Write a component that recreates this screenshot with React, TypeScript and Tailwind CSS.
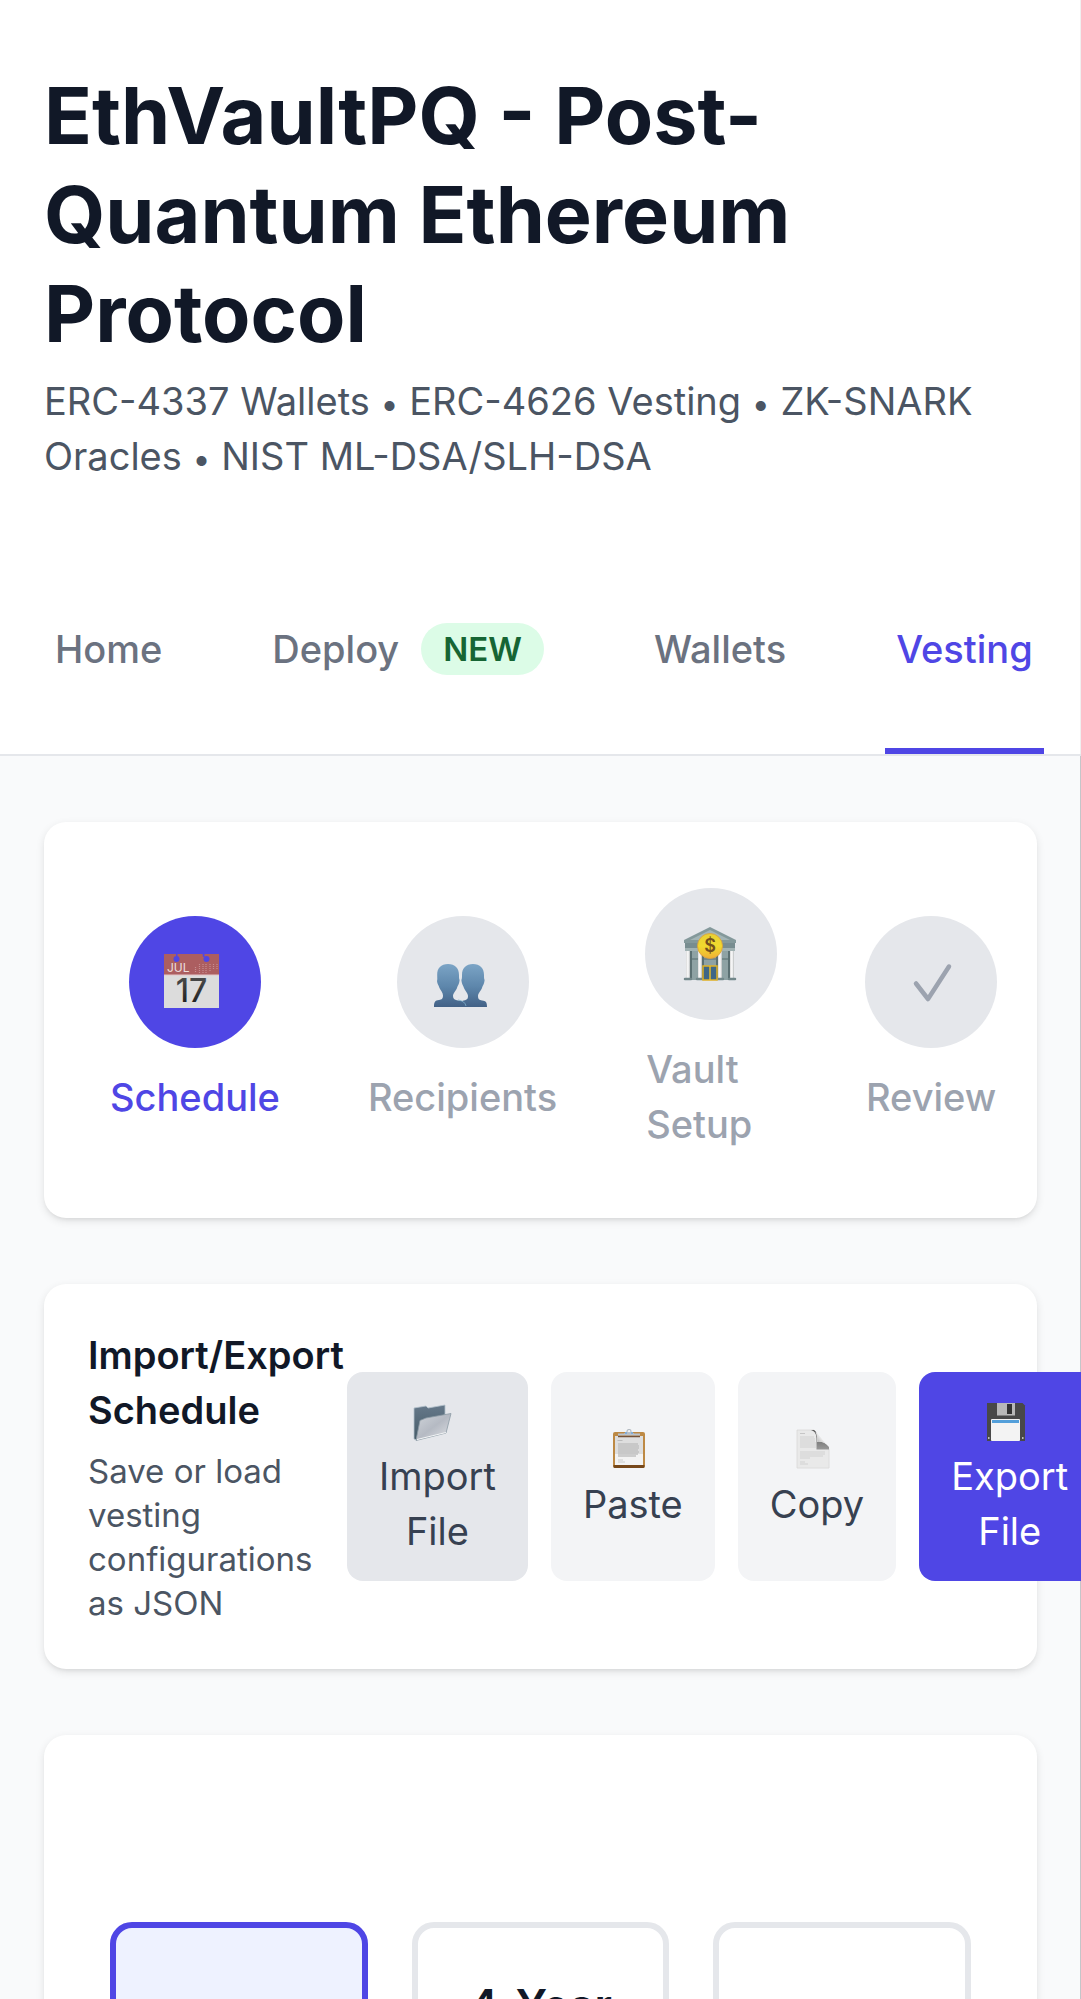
import type { ReactNode } from 'react';

function CalendarIcon() {
  return (
    <svg width="66" height="66" viewBox="0 0 66 66" aria-hidden="true">
      <defs>
        <linearGradient id="digit" x1="0" y1="0" x2="0" y2="1">
          <stop offset="0" stopColor="#555" />
          <stop offset="1" stopColor="#161616" />
        </linearGradient>
      </defs>
      <rect x="2" y="5" width="55" height="54" fill="#dcdcdc" />
      <rect x="2" y="5" width="55" height="21" fill="#ac5e60" />
      <path d="M2 26h55" stroke="#e4c6c8" strokeWidth="1" />
      <g fill="#4f46e5">
        <circle cx="14.500" cy="10" r="3" />
        <circle cx="44.500" cy="10" r="3" />
        <rect x="14" y="4" width="1.500" height="6" />
        <path d="M40.500 5h2v3h-1.500z" />
      </g>
      <text x="5" y="23" fontSize="12" fill="#eddede" fontFamily="Inter, sans-serif">JUL</text>
      <g stroke="#c68e90" strokeWidth="1.200" strokeDasharray="1 1">
        <path d="M33.500 18v6M37.500 15v9M41 15v9M44 15v9M48 15v7M51.500 15v6M55 15v5" />
      </g>
      <text x="29.500" y="53" textAnchor="middle" fontSize="32" fontWeight="500" fill="url(#digit)" fontFamily="Inter, sans-serif">17</text>
    </svg>
  );
}

function PeopleIcon() {
  return (
    <svg width="66" height="66" viewBox="0 0 66 66" aria-hidden="true">
      <defs>
        <linearGradient id="bust" x1="0" y1="13" x2="0" y2="58" gradientUnits="userSpaceOnUse">
          <stop offset="0" stopColor="#7ea7c8" />
          <stop offset=".55" stopColor="#5d86ab" />
          <stop offset="1" stopColor="#426186" />
        </linearGradient>
      </defs>
      <path fill="url(#bust)" d="M43 15c7 0 11 4 11 11 0 2 0 4 .6 5-.3 4-1.600 5-2.600 8-1 3-4 5-4 8 0 3 1 4 4 4.500 4 .5 5 1.500 5 6.500H24c0-4 5-5.500 8-6 5-1 6-2 6-5 0-3-3-5-4-8-1-3-2.300-4-2.600-8 .6-1 .6-3 .6-5 0-7 4-11 11-11z" />
      <path fill="url(#bust)" d="M18 15c7 0 11 4 11 11 0 2 0 4 .6 5-.3 4-1.600 5-2.600 8-1 3-4 5-4 8 0 3 2 4 5 4.500 5 .5 8 1.500 8 6.500H4c0-5 1-6.500 5-7 3-.5 4-1.500 4-4.500 0-3-2.500-5-3.500-7.500-1-3-2.200-4-2.500-7 .5-1 .2-4 .2-6C7 19 11 15 18 15z" />
      <path d="M28 51q7 1 8 6" fill="none" stroke="#7fb3cd" strokeWidth=".8" />
    </svg>
  );
}

function BankIcon() {
  return (
    <svg width="66" height="66" viewBox="0 0 66 66" aria-hidden="true">
      <defs>
        <linearGradient id="coin" x1="0" y1="0" x2="0" y2="1">
          <stop offset="0" stopColor="#e8cf34" />
          <stop offset=".5" stopColor="#f0da2e" />
          <stop offset="1" stopColor="#efb034" />
        </linearGradient>
        <linearGradient id="column" x1="0" y1="0" x2="1" y2="0">
          <stop offset="0" stopColor="#d8d8d8" />
          <stop offset=".5" stopColor="#fff" />
          <stop offset="1" stopColor="#b9bcbd" />
        </linearGradient>
      </defs>
      <path d="M6 19 32 6l26 13v3H6z" fill="#84999b" />
      <path d="M12 19 32 9l20 10z" fill="#a3b5b6" />
      <path d="M7 22h50v6H7z" fill="#788d90" />
      <path d="M7 27h50v3H7z" fill="#a1b2b3" />
      <path d="M8 30h48v29H8z" fill="#8ea2a4" />
      <path d="M8 38h48" stroke="#697f82" strokeWidth="1.500" />
      <path d="M13 30v27M25 30v27M39 30v27M51 30v27" stroke="#5b7073" strokeWidth="2" />
      <g fill="url(#column)">
        <rect x="8" y="30" width="4" height="27" />
        <rect x="20" y="30" width="4" height="27" />
        <rect x="40" y="30" width="4" height="27" />
        <rect x="52" y="30" width="4" height="27" />
      </g>
      <path d="M7 58h6M19 58h6M39 58h6M51 58h6" stroke="#72878a" strokeWidth="2.500" strokeLinecap="round" />
      <rect x="25" y="45" width="14" height="14" fill="#3f6786" stroke="#dfb126" strokeWidth="1.500" />
      <path d="M32 45v14" stroke="#e7bd2d" strokeWidth="1.500" />
      <circle cx="32" cy="25" r="12.500" fill="url(#coin)" stroke="#dda03a" strokeWidth=".8" />
      <text x="32" y="31" textAnchor="middle" fontSize="18" fontWeight="600" fill="#72501d" fontFamily="Inter, sans-serif">$</text>
    </svg>
  );
}

function CheckIcon() {
  return (
    <svg width="66" height="66" viewBox="0 0 66 66" fill="none" stroke="#9ca3af" strokeWidth="4.500" strokeLinecap="round" strokeLinejoin="round" aria-hidden="true">
      <path d="M18 34.500 30 50 51 17.500" />
    </svg>
  );
}

function FolderIcon() {
  return (
    <svg width="40" height="40" viewBox="0 0 40 40" aria-hidden="true">
      <defs>
        <linearGradient id="folder-back" x1="0" y1="0" x2="0" y2="1">
          <stop offset="0" stopColor="#66798a" />
          <stop offset="1" stopColor="#455b68" />
        </linearGradient>
        <linearGradient id="folder-front" x1="0" y1="0" x2="1" y2="1">
          <stop offset="0" stopColor="#d0d4da" />
          <stop offset=".5" stopColor="#b5bac3" />
          <stop offset="1" stopColor="#dfe1e5" />
        </linearGradient>
      </defs>
      <path d="M1 6 13 4l2 2 17-3v10L4 38l-3-1z" fill="url(#folder-back)" stroke="#b4c2cb" strokeWidth=".8" />
      <path d="M7 18.500 13 16 38 11.500 33 31 3 38.500z" fill="url(#folder-front)" stroke="#8c9aa5" strokeWidth=".8" />
      <path d="M4 37.500 33 30.500" stroke="#f3f5f6" strokeWidth="1" />
    </svg>
  );
}

function ClipboardIcon() {
  return (
    <svg width="34" height="40" viewBox="0 0 34 40" aria-hidden="true">
      <rect x="1" y="3" width="32" height="36" rx="2" fill="#bd8944" />
      <path d="M1.500 36h31v1.500q0 1.500-1.500 1.500H3q-1.500 0-1.500-1.500z" fill="#77481a" />
      <rect x="3" y="7" width="28" height="29" fill="#f3f3f3" />
      <rect x="3" y="7" width="28" height="18" fill="#dedede" />
      <path d="M5.500 11.500h5" stroke="#bbb" />
      <path d="M6 15h20M6 17h21M6 19h21M6 21h20M6 23h21M6 25h20M6 27h18" stroke="#c1c1c1" strokeWidth="1.300" />
      <path d="M6 31h5M6 33h7" stroke="#ccc" />
      <path d="M6 7.500h22" stroke="#745239" strokeWidth="1.500" />
      <path d="M6 4.500h6l2-1.500h6l2 1.500h6v2H6z" fill="#b9c3cf" />
      <circle cx="17" cy="2.500" r="2" fill="none" stroke="#b4bcc3" strokeWidth="1.200" />
      <path d="M13 4h2M19 4h2" stroke="#71a6da" strokeWidth="1.500" />
    </svg>
  );
}

function PageIcon() {
  return (
    <svg width="34" height="40" viewBox="0 0 34 40" aria-hidden="true">
      <defs>
        <linearGradient id="curl" x1="0" y1="1" x2="1" y2="0">
          <stop offset="0" stopColor="#777" />
          <stop offset=".35" stopColor="#ccc" />
          <stop offset=".6" stopColor="#fff" />
          <stop offset="1" stopColor="#eee" />
        </linearGradient>
        <linearGradient id="curl-shade" x1="0" y1="0" x2="0" y2="1">
          <stop offset="0" stopColor="#555" />
          <stop offset="1" stopColor="#999" />
        </linearGradient>
      </defs>
      <path d="M1 1h17l15 19v19H1z" fill="#e9e9e9" stroke="#d8d8d8" strokeWidth=".8" />
      <path d="M4 4.500h5" stroke="#c6c6c6" />
      <path d="M4 8h14M4 10h15M4 12h15M4 14h16M4 16h16M4 18h16M4 23h25M4 25h25M4 27h23M4 29h10M4 33h5M4 35h8" stroke="#d2d2d2" strokeWidth="1.200" />
      <path d="M15 1q5 1 5.500 8v11.500H33V18q-5-6-12-5 1-10-3-12z" fill="url(#curl-shade)" />
      <path d="M18 1q3 2 3.500 12Q29 12 33 18z" fill="url(#curl)" />
    </svg>
  );
}

function FloppyIcon() {
  return (
    <svg width="40" height="40" viewBox="0 0 40 40" aria-hidden="true">
      <path d="M1 1h35.500L39 3.500V39H1z" fill="#484848" />
      <rect x="11" y="1" width="18" height="12.500" fill="#b8b8b8" />
      <rect x="21" y="2" width="5" height="10" fill="#333" />
      <rect x="5" y="17" width="29" height="22" rx="1" fill="#f3f3f3" />
      <rect x="6" y="18" width="27" height="3" fill="#539fda" />
      <path d="M2 35h1.500v2H2zM36 35h1.500v2H36z" fill="#bbb" />
    </svg>
  );
}

function Tab({ active, children }: { active?: boolean; children: ReactNode }) {
  return (
    <a
      href="#"
      aria-current={active ? 'page' : undefined}
      className={`flex shrink-0 items-center whitespace-nowrap border-b-6 px-[11px] pt-[66px] pb-[66px] text-[38px]/[66px] font-medium ${
        active ? 'border-[#4f46e5] text-[#4f46e5]' : 'border-transparent text-[#6b7280]'
      }`}
    >
      {children}
    </a>
  );
}

function Step({ active, label, children }: { active?: boolean; label: string; children: ReactNode }) {
  return (
    <li className="flex shrink-0 flex-col items-center gap-[22px]">
      <span className={`flex size-[132px] items-center justify-center rounded-full ${active ? 'bg-[#4f46e5]' : 'bg-[#e5e7eb]'}`}>
        {children}
      </span>
      <span className={`text-[38px]/[55px] font-medium ${label === 'Vault Setup' ? 'w-[130px]' : ''} ${active ? 'text-[#4f46e5]' : 'text-[#9ca3af]'}`}>
        {label}
      </span>
    </li>
  );
}

function Action({ label, className, icon }: { label: ReactNode; className: string; icon: ReactNode }) {
  return (
    <button
      type="button"
      className={`flex shrink-0 flex-col items-center justify-center rounded-2xl px-8 py-[22px] text-center text-[38px]/[55px] ${className}`}
    >
      <span className="mr-2 flex h-[55px] items-center">{icon}</span>
      <span>{label}</span>
    </button>
  );
}

function Dot() {
  return <span className="text-[32px]/[32px]">•</span>;
}

const card = 'rounded-[22px] bg-white shadow-[0_3px_8px_rgba(0,0,0,0.1),0_3px_5px_-3px_rgba(0,0,0,0.1)]';

export default function App() {
  return (
    <div className="h-screen overflow-hidden bg-[#f9fafb] font-['Inter',sans-serif] text-[#111827]">
      <header className="border-b-2 border-b-[#e5e7eb] bg-white shadow-[inset_-1px_0_0_#f0f0f0]">
        <div className="px-11 py-[66px]">
          <h1 className="text-[79px]/[99px] font-bold">EthVaultPQ - Post-<br />Quantum Ethereum Protocol</h1>
          <p className="mt-[11px] text-[38px]/[55px] text-[#4b5563]">
            ERC-4337 Wallets <Dot /> ERC-4626 Vesting <Dot /> ZK-SNARK Oracles <Dot /> NIST ML-DSA/SLH-DSA
          </p>
        </div>
        <nav className="flex gap-[88px] px-11" aria-label="Main">
          <Tab>Home</Tab>
          <Tab>
            Deploy
            <span className="ml-[22px] rounded-full bg-[#dcfce7] px-[22px] text-[33px]/[52px] font-semibold text-[#166534]">NEW</span>
          </Tab>
          <Tab>Wallets</Tab>
          <Tab active>Vesting</Tab>
        </nav>
      </header>

      <main className="flex flex-col gap-[66px] px-11 py-[66px] shadow-[inset_-1px_0_0_#c4c6c9]">
        <section className={`${card} p-[66px]`}>
          <ol className="flex items-center gap-[88px]">
            <Step label="Schedule" active><CalendarIcon /></Step>
            <Step label="Recipients"><PeopleIcon /></Step>
            <Step label="Vault Setup"><BankIcon /></Step>
            <Step label="Review"><CheckIcon /></Step>
          </ol>
        </section>

        <section className={`${card} flex items-center p-11`}>
          <div className="w-[259px] shrink-0">
            <h2 className="text-[38px]/[55px] font-semibold">Import/Export Schedule</h2>
            <p className="mt-[11px] text-[33px]/[44px] text-[#4b5563]">Save or load vesting configurations as JSON</p>
          </div>
          <div className="flex gap-[23px]">
            <Action icon={<FolderIcon />} label={<>Import<br />File</>} className="bg-[#e5e7eb] text-[#374151]" />
            <Action icon={<ClipboardIcon />} label="Paste" className="bg-[#f3f4f6] text-[#374151]" />
            <Action icon={<PageIcon />} label="Copy" className="bg-[#f3f4f6] text-[#374151]" />
            <Action icon={<FloppyIcon />} label={<>Export<br />File</>} className="bg-[#4f46e5] text-white" />
          </div>
        </section>

        <section className={`${card} px-[66px] pt-[187px] pb-[66px]`}>
          <div className="grid grid-cols-3 gap-11">
            <button type="button" aria-label="First preset" aria-pressed="true" className="h-[300px] rounded-[22px] border-6 border-[#4f46e5] bg-[#eef2ff]" />
            <button type="button" className="flex h-[300px] justify-center rounded-[22px] border-6 border-[#e5e7eb] px-8 pt-11 text-[44px]/[66px] font-semibold">4-Year</button>
            <button type="button" aria-label="Third preset" className="h-[300px] rounded-[22px] border-6 border-[#e5e7eb]" />
          </div>
        </section>
      </main>
    </div>
  );
}
